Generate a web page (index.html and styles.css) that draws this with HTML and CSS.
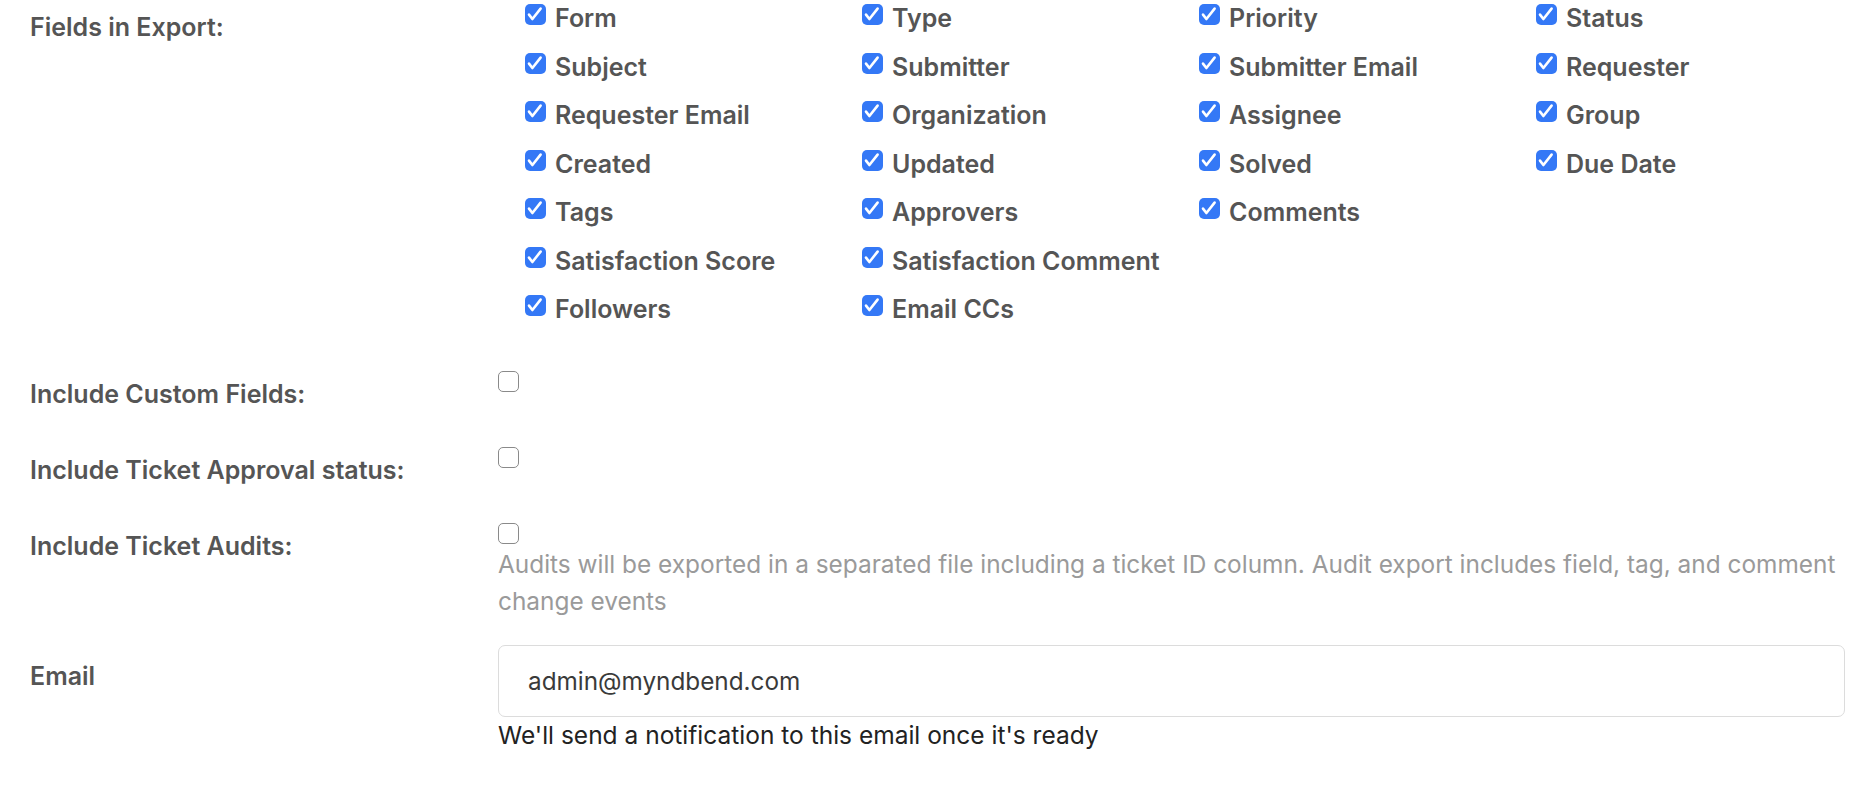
FILE: index.html
```html
<!DOCTYPE html>
<html lang="en">
<head>
<meta charset="utf-8">
<title>Export</title>
<link rel="stylesheet" href="styles.css">
</head>
<body>
<form class="export-form">
  <div class="row row-fields">
    <div class="row-label label-fields">Fields in Export:</div>
    <div class="control">
      <div class="field-grid">
        <label class="opt"><span class="box checked"><svg viewBox="0 0 21 21"><path d="M4 10.6 L7.4 15 L15.6 4.6"/></svg></span>Form</label>
        <label class="opt"><span class="box checked"><svg viewBox="0 0 21 21"><path d="M4 10.6 L7.4 15 L15.6 4.6"/></svg></span>Type</label>
        <label class="opt"><span class="box checked"><svg viewBox="0 0 21 21"><path d="M4 10.6 L7.4 15 L15.6 4.6"/></svg></span>Priority</label>
        <label class="opt"><span class="box checked"><svg viewBox="0 0 21 21"><path d="M4 10.6 L7.4 15 L15.6 4.6"/></svg></span>Status</label>
        <label class="opt"><span class="box checked"><svg viewBox="0 0 21 21"><path d="M4 10.6 L7.4 15 L15.6 4.6"/></svg></span>Subject</label>
        <label class="opt"><span class="box checked"><svg viewBox="0 0 21 21"><path d="M4 10.6 L7.4 15 L15.6 4.6"/></svg></span>Submitter</label>
        <label class="opt"><span class="box checked"><svg viewBox="0 0 21 21"><path d="M4 10.6 L7.4 15 L15.6 4.6"/></svg></span>Submitter Email</label>
        <label class="opt"><span class="box checked"><svg viewBox="0 0 21 21"><path d="M4 10.6 L7.4 15 L15.6 4.6"/></svg></span>Requester</label>
        <label class="opt"><span class="box checked"><svg viewBox="0 0 21 21"><path d="M4 10.6 L7.4 15 L15.6 4.6"/></svg></span>Requester Email</label>
        <label class="opt"><span class="box checked"><svg viewBox="0 0 21 21"><path d="M4 10.6 L7.4 15 L15.6 4.6"/></svg></span>Organization</label>
        <label class="opt"><span class="box checked"><svg viewBox="0 0 21 21"><path d="M4 10.6 L7.4 15 L15.6 4.6"/></svg></span>Assignee</label>
        <label class="opt"><span class="box checked"><svg viewBox="0 0 21 21"><path d="M4 10.6 L7.4 15 L15.6 4.6"/></svg></span>Group</label>
        <label class="opt"><span class="box checked"><svg viewBox="0 0 21 21"><path d="M4 10.6 L7.4 15 L15.6 4.6"/></svg></span>Created</label>
        <label class="opt"><span class="box checked"><svg viewBox="0 0 21 21"><path d="M4 10.6 L7.4 15 L15.6 4.6"/></svg></span>Updated</label>
        <label class="opt"><span class="box checked"><svg viewBox="0 0 21 21"><path d="M4 10.6 L7.4 15 L15.6 4.6"/></svg></span>Solved</label>
        <label class="opt"><span class="box checked"><svg viewBox="0 0 21 21"><path d="M4 10.6 L7.4 15 L15.6 4.6"/></svg></span>Due Date</label>
        <label class="opt"><span class="box checked"><svg viewBox="0 0 21 21"><path d="M4 10.6 L7.4 15 L15.6 4.6"/></svg></span>Tags</label>
        <label class="opt"><span class="box checked"><svg viewBox="0 0 21 21"><path d="M4 10.6 L7.4 15 L15.6 4.6"/></svg></span>Approvers</label>
        <label class="opt"><span class="box checked"><svg viewBox="0 0 21 21"><path d="M4 10.6 L7.4 15 L15.6 4.6"/></svg></span>Comments</label>
        <span class="opt empty"></span>
        <label class="opt"><span class="box checked"><svg viewBox="0 0 21 21"><path d="M4 10.6 L7.4 15 L15.6 4.6"/></svg></span>Satisfaction Score</label>
        <label class="opt"><span class="box checked"><svg viewBox="0 0 21 21"><path d="M4 10.6 L7.4 15 L15.6 4.6"/></svg></span>Satisfaction Comment</label>
        <span class="opt empty"></span>
        <span class="opt empty"></span>
        <label class="opt"><span class="box checked"><svg viewBox="0 0 21 21"><path d="M4 10.6 L7.4 15 L15.6 4.6"/></svg></span>Followers</label>
        <label class="opt"><span class="box checked"><svg viewBox="0 0 21 21"><path d="M4 10.6 L7.4 15 L15.6 4.6"/></svg></span>Email CCs</label>
      </div>
    </div>
  </div>

  <div class="row row-check">
    <div class="row-label">Include Custom Fields:</div>
    <div class="control"><span class="box"></span></div>
  </div>

  <div class="row row-check">
    <div class="row-label">Include Ticket Approval status:</div>
    <div class="control"><span class="box"></span></div>
  </div>

  <div class="row row-audits">
    <div class="row-label">Include Ticket Audits:</div>
    <div class="control">
      <span class="box"></span>
      <p class="help">Audits will be exported in a separated file including a ticket ID column. Audit export includes field, tag, and comment change events</p>
    </div>
  </div>

  <div class="row row-email">
    <div class="row-label label-email">Email</div>
    <div class="control">
      <div class="input">admin@myndbend.com</div>
      <p class="note">We'll send a notification to this email once it's ready</p>
    </div>
  </div>
</form>
</body>
</html>
```

FILE: styles.css
```css
html, body {
  margin: 0;
  padding: 0;
  background: #ffffff;
}

body {
  font-family: Inter, "Noto Sans", "Liberation Sans", sans-serif;
  color: #555555;
}

.export-form {
  padding-left: 30px;
  padding-right: 17px;
}

.row {
  display: grid;
  grid-template-columns: 468px 1fr;
}

.row-label {
  font-size: 25px;
  font-weight: 600;
  line-height: 36px;
  color: #555555;
  padding-top: 16px;
  white-space: nowrap;
}

.label-fields {
  padding-top: 9px;
}

.field-grid {
  margin-left: 27px;
  display: grid;
  grid-template-columns: repeat(4, 337px);
  grid-auto-rows: 36px;
  row-gap: 12.5px;
}

.opt {
  display: flex;
  align-items: flex-start;
  font-size: 25px;
  font-weight: 600;
  line-height: 36px;
  color: #555555;
  white-space: nowrap;
}

.box {
  display: block;
  box-sizing: border-box;
  width: 21px;
  height: 21px;
  border: 1.5px solid #8a8a8a;
  border-radius: 5px;
  background: #ffffff;
  flex: none;
}

.opt .box {
  margin-top: 4px;
  margin-right: 9px;
}

.box.checked {
  border: none;
  background: #3478f6;
}

.box svg {
  display: block;
  width: 21px;
  height: 21px;
}

.box svg path {
  fill: none;
  stroke: #ffffff;
  stroke-width: 2.6;
  stroke-linecap: round;
  stroke-linejoin: round;
}

.row-fields {
  height: 327px;
  margin-bottom: 33px;
}

.row-check {
  height: 76px;
}

.row-check .control,
.row-audits .control {
  padding-top: 11px;
}

.row-audits {
  height: 133px;
}

.help {
  margin: 2px 0 0;
  font-size: 24.4px;
  line-height: 37px;
  color: #9a9a9a;
}

.label-email {
  padding-top: 13px;
}

.input {
  box-sizing: border-box;
  height: 72px;
  border: 1px solid #dcdcdc;
  border-radius: 7px;
  padding: 0 29px;
  font-size: 24.3px;
  line-height: 70px;
  color: #3a3a3a;
}

.note {
  margin: 0;
  font-size: 24.5px;
  line-height: 36px;
  color: #222222;
}
```
